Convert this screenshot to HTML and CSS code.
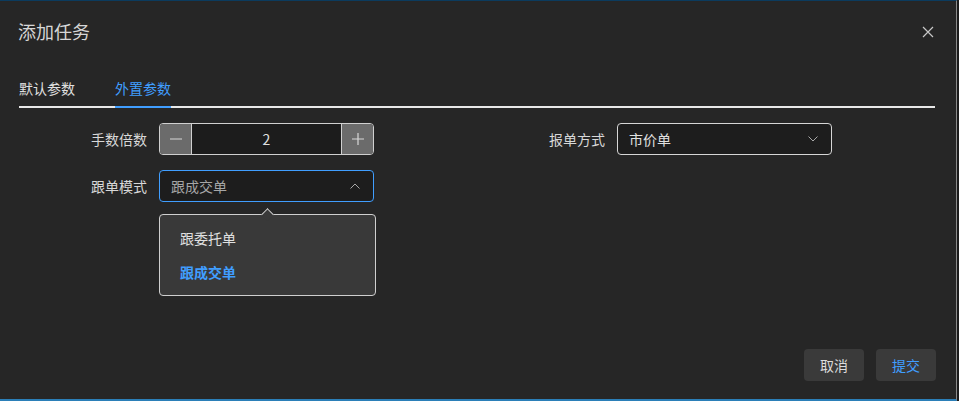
FILE: index.html
```html
<!DOCTYPE html>
<html lang="zh-CN">

<head>
    <meta charset="UTF-8">
    <meta name="viewport" content="width=device-width, initial-scale=1.0">
    <title>添加任务</title>
    <link rel="stylesheet" href="styles.css">
</head>

<body>
    <div class="dialog">
        <div class="dialog-header">
            <span class="dialog-title">添加任务</span>
            <button class="dialog-close" aria-label="关闭">
                <svg width="12" height="12" viewBox="0 0 12 12">
                    <path d="M1 1 L11 11 M11 1 L1 11" stroke="#c8c8c8" stroke-width="1.2" fill="none"/>
                </svg>
            </button>
        </div>

        <div class="dialog-body">
            <div class="tabs">
                <div class="tab">默认参数</div>
                <div class="tab active">外置参数</div>
            </div>

            <div class="form-grid">
                <div class="form-item">
                    <label class="form-label">手数倍数</label>
                    <div class="input-number">
                        <span class="step-btn">
                            <svg width="12" height="12" viewBox="0 0 12 12"><path d="M0 6 H12" stroke="#d8d8d8" stroke-width="1.2"/></svg>
                        </span>
                        <input class="number-value" type="text" value="2">
                        <span class="step-btn">
                            <svg width="12" height="12" viewBox="0 0 12 12"><path d="M0 6 H12 M6 0 V12" stroke="#d8d8d8" stroke-width="1.2"/></svg>
                        </span>
                    </div>
                </div>

                <div class="form-item">
                    <label class="form-label">报单方式</label>
                    <div class="select">
                        <span class="select-text">市价单</span>
                        <svg class="chevron" width="10" height="6" viewBox="0 0 10 6">
                            <path d="M0.5 0.5 L5 5 L9.5 0.5" stroke="#a8a8a8" stroke-width="1" fill="none"/>
                        </svg>
                    </div>
                </div>

                <div class="form-item">
                    <label class="form-label">跟单模式</label>
                    <div class="select-wrap">
                        <div class="select focused">
                            <span class="select-text muted">跟成交单</span>
                            <svg class="chevron" width="10" height="6" viewBox="0 0 10 6">
                                <path d="M0.5 5.5 L5 1 L9.5 5.5" stroke="#a8a8a8" stroke-width="1" fill="none"/>
                            </svg>
                        </div>
                        <ul class="dropdown">
                            <li class="dropdown-item">跟委托单</li>
                            <li class="dropdown-item selected">跟成交单</li>
                        </ul>
                    </div>
                </div>
            </div>
        </div>

        <div class="dialog-footer">
            <button class="btn">取消</button>
            <button class="btn btn-primary">提交</button>
        </div>
    </div>
</body>

</html>
```

FILE: styles.css
```css
body {
    margin: 0;
    background: #1b1b1b;
    font-family: "Noto Sans CJK SC", "Noto Sans", sans-serif;
    color: #dcdcdc;
}

.dialog {
    width: 956px;
    height: 398px;
    background: #262626;
    border-top: 1px solid #0b3b5e;
    border-right: 1px solid #8a8a8a;
    border-bottom: 2px solid #2b7fb8;
    display: flex;
    flex-direction: column;
    box-sizing: content-box;
}

.dialog-header {
    display: flex;
    justify-content: space-between;
    align-items: center;
    padding: 17px 22px 0 18px;
    height: 26px;
}

.dialog-title {
    font-size: 18px;
    line-height: 26px;
    color: #d6d6d6;
}

.dialog-close {
    background: none;
    border: none;
    padding: 0;
    width: 12px;
    height: 12px;
    display: flex;
    margin-top: 2px;
    cursor: pointer;
}

.dialog-body {
    padding: 0 21px 0 19px;
    flex: 1;
}

.tabs {
    display: flex;
    margin-top: 26px;
    border-bottom: 2px solid #e8e8e8;
}

.tab {
    font-size: 14px;
    line-height: 36px;
    height: 36px;
    padding: 0 20px;
    color: #e0e0e0;
    position: relative;
}

.tab:first-child {
    padding-left: 0;
}

.tab.active {
    color: #409eff;
}

.tab.active::after {
    content: "";
    position: absolute;
    left: 20px;
    right: 20px;
    bottom: -2px;
    height: 2px;
    background: #409eff;
}

.form-grid {
    display: grid;
    grid-template-columns: 1fr 1fr;
    row-gap: 15px;
    margin-top: 15px;
}

.form-item {
    display: flex;
    align-items: center;
}

.form-label {
    width: 128px;
    padding-right: 12px;
    text-align: right;
    font-size: 14px;
    color: #d8d8d8;
}

.input-number {
    display: flex;
    width: 215px;
    height: 32px;
    box-sizing: border-box;
    border: 1px solid #d0d0d0;
    border-radius: 4px;
    overflow: hidden;
}

.step-btn {
    width: 31px;
    background: #6b6b6b;
    display: flex;
    align-items: center;
    justify-content: center;
}

.step-btn:first-child {
    border-right: 1px solid #d0d0d0;
}

.step-btn:last-child {
    border-left: 1px solid #d0d0d0;
}

.number-value {
    flex: 1;
    min-width: 0;
    border: none;
    outline: none;
    background: #1c1c1c;
    color: #e0e0e0;
    text-align: center;
    font-family: inherit;
    font-size: 14px;
    padding: 0;
}

.select-wrap {
    position: relative;
}

.select {
    display: flex;
    align-items: center;
    justify-content: space-between;
    width: 215px;
    height: 32px;
    box-sizing: border-box;
    padding: 0 13px 0 11px;
    background: #1d1d1d;
    border: 1px solid #d6d6d6;
    border-radius: 4px;
}

.select.focused {
    border-color: #409eff;
}

.select-text {
    font-size: 14px;
    color: #e0e0e0;
}

.select-text.muted {
    color: #a6a6a6;
}

.dropdown {
    position: absolute;
    top: 44px;
    left: 0;
    width: 217px;
    box-sizing: border-box;
    margin: 0;
    padding: 6px 0;
    list-style: none;
    background: #393939;
    border: 1px solid #cfcfcf;
    border-radius: 4px;
}

.dropdown::before {
    content: "";
    position: absolute;
    top: -5px;
    left: 103px;
    width: 8px;
    height: 8px;
    background: #393939;
    border-top: 1px solid #cfcfcf;
    border-left: 1px solid #cfcfcf;
    transform: rotate(45deg);
}

.dropdown-item {
    height: 34px;
    line-height: 34px;
    padding-left: 20px;
    font-size: 14px;
    color: #e0e0e0;
}

.dropdown-item.selected {
    color: #409eff;
    font-weight: bold;
}

.dialog-footer {
    display: flex;
    justify-content: flex-end;
    gap: 12px;
    padding: 0 20px 18px 0;
}

.btn {
    width: 60px;
    height: 32px;
    border: none;
    border-radius: 4px;
    background: #3a3a3a;
    color: #dcdcdc;
    font-family: inherit;
    font-size: 14px;
    cursor: pointer;
}

.btn-primary {
    color: #409eff;
}
```
